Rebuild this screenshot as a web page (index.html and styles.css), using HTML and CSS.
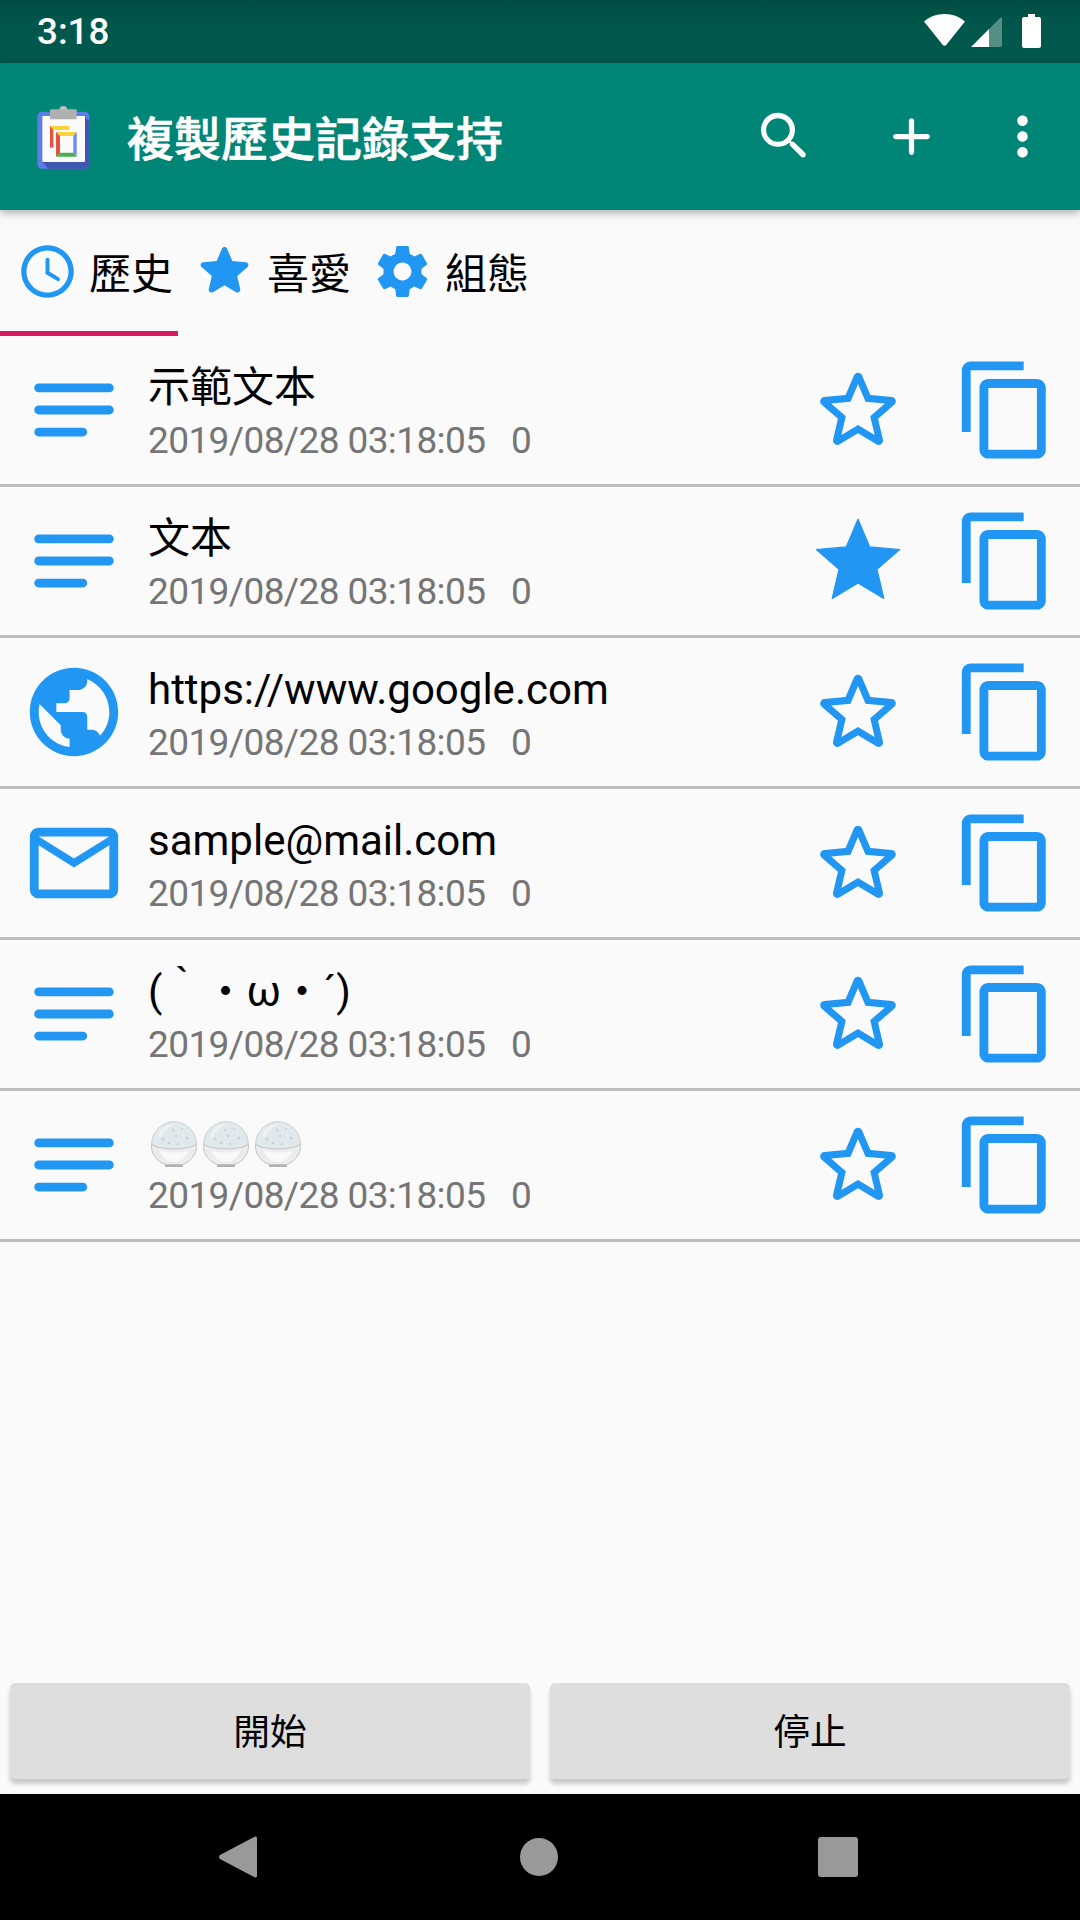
FILE: index.html
```html
<!DOCTYPE html>
<html lang="zh-Hant">
<head>
  <meta charset="UTF-8" />
  <meta name="viewport" content="width=device-width, initial-scale=1.0" />
  <title>複製歷史記錄支持</title>
  <link rel="stylesheet" href="styles.css">
</head>
<body>
  <!-- shared icons -->
  <svg class="icon-defs" aria-hidden="true">
    <symbol id="i-notes" viewBox="0 0 24 24"><path d="M4 18h10c.55 0 1-.45 1-1s-.45-1-1-1H4c-.55 0-1 .45-1 1s.45 1 1 1zM3 7c0 .55.45 1 1 1h16c.55 0 1-.45 1-1s-.45-1-1-1H4c-.55 0-1 .45-1 1zm1 6h16c.55 0 1-.45 1-1s-.45-1-1-1H4c-.55 0-1 .45-1 1s.45 1 1 1z"/></symbol>
    <symbol id="i-globe" viewBox="0 0 24 24"><path d="M12 2C6.48 2 2 6.48 2 12s4.48 10 10 10 10-4.48 10-10S17.52 2 12 2zm-1 17.93c-3.95-.49-7-3.85-7-7.93 0-.62.08-1.21.21-1.79L9 15v1c0 1.1.9 2 2 2v1.93zm6.9-2.54c-.26-.81-1-1.39-1.9-1.39h-1v-3c0-.55-.45-1-1-1H8v-2h2c.55 0 1-.45 1-1V7h2c1.1 0 2-.9 2-2v-.41c2.93 1.19 5 4.06 5 7.41 0 2.08-.8 3.97-2.1 5.39z"/></symbol>
    <symbol id="i-mail" viewBox="0 0 24 24"><path d="M20 4H4c-1.1 0-1.99.9-1.99 2L2 18c0 1.1.9 2 2 2h16c1.1 0 2-.9 2-2V6c0-1.1-.9-2-2-2zm0 14H4V8l8 5 8-5v10zm-8-7L4 6h16l-8 5z"/></symbol>
    <symbol id="i-star-line" viewBox="0 0 24 24"><path d="M19.65 9.04l-4.84-.42-1.89-4.45c-.34-.81-1.5-.81-1.84 0L9.19 8.63l-4.83.41c-.88.07-1.24 1.17-.57 1.75l3.67 3.18-1.1 4.72c-.2.86.73 1.54 1.49 1.08l4.15-2.5 4.15 2.51c.76.46 1.69-.22 1.49-1.08l-1.1-4.73 3.67-3.18c.67-.58.32-1.68-.56-1.75zM12 15.4l-3.76 2.27 1-4.28-3.32-2.88 4.38-.38L12 6.1l1.71 4.04 4.38.38-3.32 2.88 1 4.28L12 15.4z"/></symbol>
    <symbol id="i-star" viewBox="0 0 24 24"><path d="M12 17.27L18.18 21l-1.64-7.03L22 9.24l-7.19-.61L12 2 9.19 8.63 2 9.24l5.46 4.73L5.82 21z" stroke="#2196f3" stroke-width=".3" stroke-linejoin="round"/></symbol>
    <symbol id="i-copy" viewBox="0 0 24 24"><path d="M16 1H4c-1.1 0-2 .9-2 2v14h2V3h12V1zm3 4H8c-1.1 0-2 .9-2 2v14c0 1.1.9 2 2 2h11c1.1 0 2-.9 2-2V7c0-1.1-.9-2-2-2zm0 16H8V7h11v14z"/></symbol>
    <symbol id="i-rice" viewBox="0 0 46 46">
      <circle cx="23" cy="23" r="22.300" fill="#e2e9ec" stroke="#c8cfd3"/>
      <path d="M7 15C10 7 17 3 25 3c-8 2-13 6-15 13z" fill="#f1f4f6"/>
      <g fill="#c6d3db"><circle cx="12" cy="18" r="1.500"/><circle cx="22" cy="9" r="1.200"/><circle cx="31" cy="8" r="1.100"/><circle cx="18" cy="22" r="1.400"/><circle cx="36" cy="17" r="1.500"/><circle cx="27" cy="23" r="1.300"/><circle cx="25" cy="15" r="1.200"/></g>
      <path d="M14 42h18v3c0 .6-.4 1-1 1H15c-.6 0-1-.4-1-1z" fill="#b0b0b0"/>
      <path d="M.6 23c6 6.500 38.800 6.500 44.800 0C46.500 33.500 39 41 32 43.500H14C7 41 -.5 33.500 .6 23z" fill="#ececec" stroke="#c4c4c4"/>
      <path d="M9 30c8 2 20 2 28 0-2 6-7 11-14 11S11 36 9 30z" fill="#f9f9f9"/>
    </symbol>
  </svg>

  <div class="status-bar">
    <span class="status-time">3:18</span>
    <svg class="wifi" viewBox="0 0 41 32"><path d="M20.500 0C12 0 5 3 0 7.500L18.800 31c.9 1.100 2.500 1.100 3.400 0L41 7.500C36 3 29 0 20.500 0z"/></svg>
    <svg class="signal" viewBox="0 0 31 31"><path d="M18 13L0 31h18z"/><path d="M18 13L29 2c.8-.8 2-.3 2 .8V29c0 1.100-.9 2-2 2H18z" opacity=".33"/></svg>
    <svg class="battery" viewBox="0 0 19 34"><path d="M6 0h7v3h4c1.100 0 2 .9 2 2v27c0 1.100-.9 2-2 2H2c-1.100 0-2-.9-2-2V5c0-1.100.9-2 2-2h4z"/></svg>
  </div>

  <header class="app-bar">
    <svg class="logo" viewBox="0 0 270 270">
      <rect x="52" y="62" width="156" height="171" rx="14" fill="#5c7ce8"/>
      <path d="M192 75l16 16v128c0 8-6 14-14 14H84l-17-20z" fill="#3f57b0"/>
      <rect x="67" y="75" width="128" height="138" rx="3" fill="#fafafa"/>
      <circle cx="130" cy="57" r="12" fill="#bdbdbd"/>
      <circle cx="130" cy="57" r="5" fill="#e0e0e0"/>
      <rect x="90" y="55" width="80" height="30" rx="3" fill="#b0b0b0"/>
      <path d="M90 105h10v65H90z" fill="#e8503f"/>
      <path d="M90 105h58v12H100z" fill="#fdd33b"/>
      <path d="M108 123h62l-10 12h-40z" fill="#fdd33b"/>
      <path d="M108 123l12 12v50l-12 12z" fill="#e8503f"/>
      <path d="M170 123v74l-10-12v-50z" fill="#6a8df0"/>
      <path d="M108 197l12-12h40l10 12z" fill="#4caf50"/>
    </svg>
    <h1 class="app-title">複製歷史記錄支持</h1>
    <button class="action">
      <svg viewBox="0 0 24 24"><path d="M15.500 14h-.79l-.28-.27c1.200-1.400 1.820-3.310 1.480-5.340-.47-2.780-2.790-5-5.590-5.340-4.200-.52-7.720 3.010-7.210 7.210.34 2.800 2.560 5.120 5.340 5.590 2.030.34 3.940-.28 5.340-1.480l.27.28v.79l4.260 4.250c.41.41 1.070.41 1.480 0l.01-.01c.41-.41.41-1.070 0-1.480L15.500 14zm-6 0C7.010 14 5 11.990 5 9.500S7.010 5 9.500 5 14 7.010 14 9.500 11.990 14 9.500 14z"/></svg>
    </button>
    <button class="action">
      <svg viewBox="0 0 24 24"><path d="M18 13h-5v5c0 .55-.45 1-1 1s-1-.45-1-1v-5H6c-.55 0-1-.45-1-1s.45-1 1-1h5V6c0-.55.45-1 1-1s1 .45 1 1v5h5c.55 0 1 .45 1 1s-.45 1-1 1z"/></svg>
    </button>
    <button class="action action-more">
      <svg viewBox="0 0 24 24"><path d="M12 8c1.100 0 2-.9 2-2s-.9-2-2-2-2 .9-2 2 .9 2 2 2zm0 2c-1.100 0-2 .9-2 2s.9 2 2 2 2-.9 2-2-.9-2-2-2zm0 6c-1.100 0-2 .9-2 2s.9 2 2 2 2-.9 2-2-.9-2-2-2z"/></svg>
    </button>
  </header>

  <nav class="tabs">
    <div class="tab tab-active">
      <svg class="tab-clock" viewBox="0 0 24 24"><path d="M11.990 2C6.470 2 2 6.480 2 12s4.470 10 9.990 10C17.520 22 22 17.520 22 12S17.520 2 11.990 2zM12 20c-4.420 0-8-3.580-8-8s3.580-8 8-8 8 3.580 8 8-3.580 8-8 8z"/><path d="M12 7.500v5l4 2.400" fill="none" stroke="#2196f3" stroke-width="1.500" stroke-linecap="round"/></svg>
      <span>歷史</span>
    </div>
    <div class="tab">
      <svg class="tab-star" viewBox="0 0 24 24"><path d="M12 17.270l4.150 2.510c.76.46 1.690-.22 1.490-1.080l-1.100-4.720 3.670-3.180c.67-.58.31-1.680-.57-1.750l-4.830-.41-1.890-4.460c-.34-.81-1.500-.81-1.840 0L9.190 8.630l-4.830.41c-.88.07-1.240 1.170-.57 1.750l3.670 3.180-1.100 4.720c-.2.86.73 1.540 1.490 1.080l4.150-2.500z"/></svg>
      <span>喜愛</span>
    </div>
    <div class="tab">
      <svg class="tab-gear" viewBox="0 0 24 24"><path d="M19.430 12.980c.04-.32.07-.64.07-.98s-.03-.66-.07-.98l2.110-1.650c.19-.15.24-.42.12-.64l-2-3.460c-.12-.22-.39-.3-.61-.22l-2.490 1c-.52-.4-1.080-.73-1.690-.98l-.38-2.650C14.460 2.180 14.250 2 14 2h-4c-.25 0-.46.18-.49.42l-.38 2.650c-.61.25-1.170.59-1.690.98l-2.490-1c-.23-.09-.49 0-.61.22l-2 3.460c-.13.22-.07.49.12.64l2.110 1.650c-.04.32-.07.65-.07.98s.03.66.07.98l-2.110 1.650c-.19.15-.24.42-.12.64l2 3.460c.12.22.39.3.61.22l2.490-1c.52.4 1.080.73 1.690.98l.38 2.650c.03.24.24.42.49.42h4c.25 0 .46-.18.49-.42l.38-2.650c.61-.25 1.170-.59 1.690-.98l2.490 1c.23.09.49 0 .61-.22l2-3.460c.12-.22.07-.49-.12-.64l-2.110-1.650zM12 15.500c-1.930 0-3.500-1.570-3.500-3.500s1.570-3.500 3.500-3.500 3.500 1.570 3.500 3.500-1.570 3.500-3.500 3.500z"/></svg>
      <span>組態</span>
    </div>
  </nav>

  <main class="history">
    <div class="row">
      <svg class="row-icon"><use href="#i-notes"/></svg>
      <div class="row-text">
        <div class="row-title">示範文本</div>
        <div class="row-date">2019/08/28 03:18:05   0</div>
      </div>
      <svg class="row-star"><use href="#i-star-line"/></svg>
      <svg class="row-copy"><use href="#i-copy"/></svg>
    </div>
    <div class="row">
      <svg class="row-icon"><use href="#i-notes"/></svg>
      <div class="row-text">
        <div class="row-title">文本</div>
        <div class="row-date">2019/08/28 03:18:05   0</div>
      </div>
      <span class="row-star star-on"><svg><use href="#i-star"/></svg></span>
      <svg class="row-copy"><use href="#i-copy"/></svg>
    </div>
    <div class="row">
      <svg class="row-icon"><use href="#i-globe"/></svg>
      <div class="row-text">
        <div class="row-title">https://www.google.com</div>
        <div class="row-date">2019/08/28 03:18:05   0</div>
      </div>
      <svg class="row-star"><use href="#i-star-line"/></svg>
      <svg class="row-copy"><use href="#i-copy"/></svg>
    </div>
    <div class="row">
      <svg class="row-icon"><use href="#i-mail"/></svg>
      <div class="row-text">
        <div class="row-title">sample@mail.com</div>
        <div class="row-date">2019/08/28 03:18:05   0</div>
      </div>
      <svg class="row-star"><use href="#i-star-line"/></svg>
      <svg class="row-copy"><use href="#i-copy"/></svg>
    </div>
    <div class="row">
      <svg class="row-icon"><use href="#i-notes"/></svg>
      <div class="row-text">
        <div class="row-title">(｀・ω・´)</div>
        <div class="row-date">2019/08/28 03:18:05   0</div>
      </div>
      <svg class="row-star"><use href="#i-star-line"/></svg>
      <svg class="row-copy"><use href="#i-copy"/></svg>
    </div>
    <div class="row">
      <svg class="row-icon"><use href="#i-notes"/></svg>
      <div class="row-text">
        <div class="row-title rice">
          <svg><use href="#i-rice"/></svg>
          <svg><use href="#i-rice"/></svg>
          <svg><use href="#i-rice"/></svg>
        </div>
        <div class="row-date">2019/08/28 03:18:05   0</div>
      </div>
      <svg class="row-star"><use href="#i-star-line"/></svg>
      <svg class="row-copy"><use href="#i-copy"/></svg>
    </div>
  </main>

  <div class="buttons">
    <button class="btn">開始</button>
    <button class="btn">停止</button>
  </div>

  <div class="nav-bar">
    <svg class="nav-back" viewBox="0 0 38 42"><path d="M36 .6L1 19c-1.300 1-1.300 3 0 4l35 18.400c1 .5 2-.2 2-1.300V2c0-1.200-1-1.900-2-1.400z"/></svg>
    <div class="nav-home"></div>
    <div class="nav-recent"></div>
  </div>
</body>
</html>
```

FILE: styles.css
```css
* {
  box-sizing: border-box;
}

body {
  width: 1080px;
  height: 1920px;
  margin: 0;
  display: flex;
  flex-direction: column;
  background: #fafafa;
  color: #000;
  font-family: Roboto, "Noto Sans CJK TC", sans-serif;
  overflow: hidden;
}

.icon-defs {
  display: none;
}

/* status bar */
.status-bar {
  height: 63px;
  display: flex;
  align-items: center;
  padding: 0 39px 0 37px;
  background: linear-gradient(#004e43, #00574b 40%);
  color: #fff;
}

.status-time {
  font-size: 36.75px;
  font-weight: 500;
  margin-right: auto;
}

.status-bar svg {
  fill: #fff;
  display: block;
}

.wifi {
  width: 41px;
  height: 32px;
  margin: -3px 6px 0 0;
}

.signal {
  width: 31px;
  height: 31px;
  margin: 0 20px 0 0;
}

.battery {
  width: 19px;
  height: 34px;
  margin-top: -1px;
}

/* app bar */
.app-bar {
  height: 147px;
  display: flex;
  align-items: center;
  padding: 0 10px 0 20px;
  background: #008577;
  box-shadow: 0 3px 8px rgba(0, 0, 0, 0.3);
  position: relative;
  color: #fff;
}

.logo {
  width: 90px;
  height: 90px;
  margin: -2px 17px 0 0;
  flex-shrink: 0;
}

.app-title {
  flex: 1;
  margin: 7px 0 0;
  font-size: 47px;
  font-weight: 500;
  -webkit-text-stroke: 0.6px #fff;
  line-height: 56px;
}

.action {
  width: 127px;
  height: 126px;
  padding: 0;
  border: none;
  background: none;
  display: flex;
  align-items: center;
  justify-content: center;
}

.action-more {
  width: 95px;
}

.action svg {
  width: 63px;
  height: 63px;
  fill: #fff;
}

/* tabs */
.tabs {
  height: 126px;
  display: flex;
  flex-shrink: 0;
}

.tab {
  width: 178px;
  padding-left: 15px;
  display: flex;
  align-items: center;
  gap: 11px;
  font-size: 42px;
  border-bottom: 5px solid transparent;
}

.tab svg {
  width: 63px;
  height: 63px;
  margin-top: 2px;
  fill: #2196f3;
  flex-shrink: 0;
}

.tab .tab-clock {
  transform: translateX(1px);
}

.tab .tab-star {
  width: 67px;
  height: 67px;
  margin: 0 -2px;
}

.tab .tab-gear {
  width: 61px;
  height: 61px;
  margin: 2px 1px 0;
}

.tab-active {
  border-bottom-color: #d81b60;
}

/* history list */
.history {
  flex: 1;
}

.row {
  height: 151px;
  display: flex;
  align-items: center;
  padding-left: 21px;
  border-bottom: 3px solid #bdbdbd;
}

.row svg {
  fill: #2196f3;
}

.row-icon {
  width: 106px;
  height: 106px;
  flex-shrink: 0;
}

.row-text {
  flex: 1;
  margin-left: 21px;
  padding-top: 5px;
}

.row-title {
  font-size: 42px;
  line-height: 49px;
  height: 49px;
}

.row-date {
  margin-top: 7px;
  font-size: 37px;
  letter-spacing: -0.6px;
  line-height: 43px;
  color: #757575;
  white-space: pre;
}

.row-star {
  width: 106px;
  height: 106px;
  flex-shrink: 0;
}

.star-on {
  display: flex;
  align-items: center;
  justify-content: center;
}

.star-on svg {
  width: 100px;
  height: 100px;
  flex-shrink: 0;
}

.row-copy {
  width: 106px;
  height: 106px;
  margin: 0 21px 0 42px;
  flex-shrink: 0;
}

.rice {
  display: flex;
  gap: 6px;
  padding: 3px 0 0 3px;
}

.rice svg {
  width: 46px;
  height: 46px;
  flex-shrink: 0;
}

/* bottom buttons */
.buttons {
  display: flex;
  gap: 20px;
  padding: 0 10px 15px;
}

.btn {
  flex: 1;
  height: 96px;
  padding: 0 0 4px;
  border: none;
  border-radius: 5px;
  background: #dedede;
  box-shadow: 0 5px 4px rgba(0, 0, 0, 0.2);
  font-family: inherit;
  font-size: 36.75px;
  color: #000;
}

/* navigation bar */
.nav-bar {
  height: 126px;
  background: #000;
  position: relative;
  display: flex;
  align-items: center;
  justify-content: center;
}

.nav-back {
  position: absolute;
  left: 219px;
  top: 42px;
  width: 38px;
  height: 42px;
  fill: #999;
}

.nav-home {
  position: absolute;
  left: 520px;
  top: 44px;
  width: 38px;
  height: 38px;
  border-radius: 50%;
  background: #999;
}

.nav-recent {
  position: absolute;
  left: 818px;
  top: 43px;
  width: 40px;
  height: 40px;
  border-radius: 3px;
  background: #999;
}
```
